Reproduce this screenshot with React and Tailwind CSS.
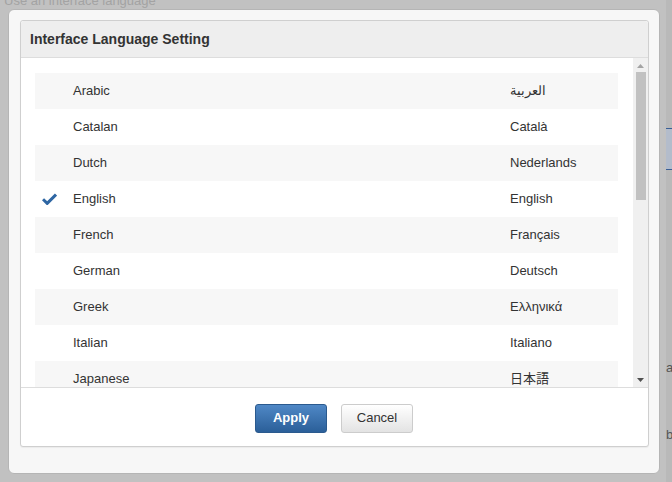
import React from "react";

const langs = [
  ["Arabic", "العربية"],
  ["Catalan", "Català"],
  ["Dutch", "Nederlands"],
  ["English", "English", true],
  ["French", "Français"],
  ["German", "Deutsch"],
  ["Greek", "Ελληνικά"],
  ["Italian", "Italiano"],
  ["Japanese", "日本語"],
  ["Korean", "한국어"],
  ["Polish", "Polski"],
];

export default function App() {
  return (
    <div
      className="relative w-[672px] h-[482px] overflow-hidden bg-[#c1c1c1]"
      style={{ fontFamily: '"Liberation Sans", Arial, "Noto Sans CJK JP", sans-serif' }}
    >
      {/* faint underlying page hints */}
      <div className="absolute left-[4px] top-[-9px] text-[13px] text-[#a3a3a3]">Use an interface language</div>
      <div className="absolute left-[666px] top-[0px] w-[6px] h-[482px] bg-[#b9b9b9]"></div>
      <div className="absolute left-[666px] top-[128px] w-[6px] h-[42px] bg-[#b3bccb] border-y border-[#3a5f95]"></div>
      <div className="absolute left-[666px] top-[358px] text-[13px] text-[#555]">ap</div>
      <div className="absolute left-[666px] top-[425px] text-[13px] text-[#555]">b</div>

      <div className="absolute left-[8px] top-[9px] w-[652px] h-[465px] bg-[#f7f7f7] rounded-[6px] border border-[#b5b5b5] pl-[11px] pt-[10px]">
        <div className="flex flex-col w-[629px] h-[427px] bg-white border border-[#cfcfcf] rounded-[3px] shadow-[0_1px_1px_rgba(0,0,0,0.05)]">
          <div className="h-[37px] shrink-0 flex items-center px-[9px] bg-[#eeeeee] border-b border-[#dddddd] rounded-t-[3px]">
            <span className="text-[14px] font-bold text-[#333]">Interface Language Setting</span>
          </div>
          <div className="flex h-[330px] shrink-0 border-b border-[#dddddd]">
            <div className="flex-1 overflow-hidden pl-[14px] pr-[15px] pt-[15px]">
              {langs.map(([en, native, sel], i) => (
                <div
                  key={en}
                  className={`flex items-center h-[36px] text-[13px] text-[#333] ${i % 2 === 0 ? "bg-[#f7f7f7]" : "bg-white"}`}
                >
                  <div className="w-[38px] flex justify-start pl-[7px]">
                    {sel && (
                      <svg width="15" height="12" viewBox="0 0 15 12">
                        <path d="M1 6.2 L5.2 10.4 L14 1.6" fill="none" stroke="#2e66a3" strokeWidth="3" strokeLinejoin="miter" />
                      </svg>
                    )}
                  </div>
                  <div className="w-[437px]">{en}</div>
                  <div>{native}</div>
                </div>
              ))}
            </div>
            <div className="w-[15px] bg-[#f0f0f0] flex flex-col items-center pt-[6px]">
              <svg width="7" height="4" viewBox="0 0 7 4"><path d="M0 4 L3.5 0 L7 4Z" fill="#a3a3a3" /></svg>
              <div className="mt-[4px] w-[10px] h-[128px] bg-[#c1c1c1]"></div>
              <div className="flex-1"></div>
              <svg className="mb-[5px]" width="7" height="4" viewBox="0 0 7 4"><path d="M0 0 L7 0 L3.5 4Z" fill="#505050" /></svg>
            </div>
          </div>
          <div className="flex-1 flex items-center justify-center gap-[14px] pt-[2px] pr-[1px]">
            <button className="w-[72px] h-[29px] rounded-[3px] border border-[#2b5a8e] bg-gradient-to-b from-[#4f88c6] to-[#2b5f99] text-white text-[13px] font-bold">
              Apply
            </button>
            <button className="w-[72px] h-[29px] rounded-[3px] border border-[#cccccc] bg-gradient-to-b from-white to-[#e3e3e3] text-[#333] text-[13px]">
              Cancel
            </button>
          </div>
        </div>
      </div>
    </div>
  );
}
